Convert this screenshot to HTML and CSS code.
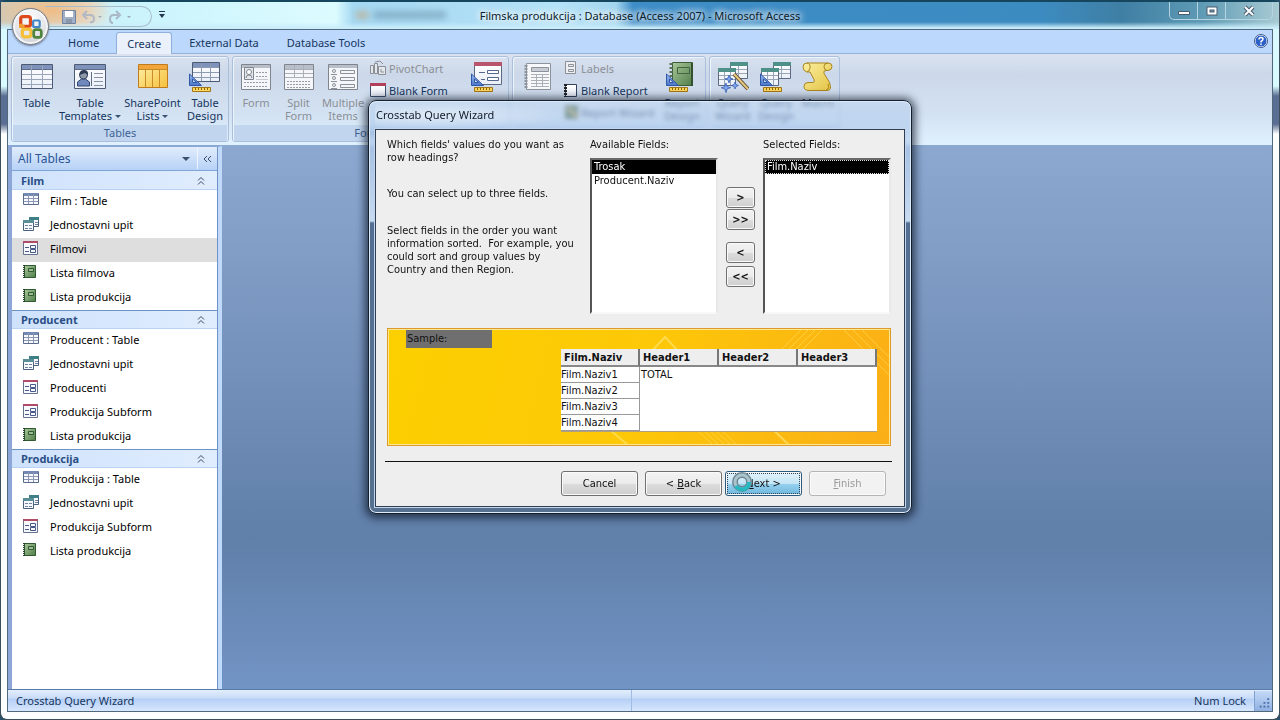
FILE: index.html
```html
<!DOCTYPE html>
<html lang="en">
<head>
<meta charset="utf-8">
<title>Filmska produkcija : Database (Access 2007) - Microsoft Access</title>
<link rel="stylesheet" href="styles.css">
</head>
<body>
<svg class="defs" aria-hidden="true">
  <defs>
    <linearGradient id="sheet" x1="0" y1="0" x2="0" y2="1"><stop offset="0" stop-color="#fff"/><stop offset="1" stop-color="#e9eef8"/></linearGradient>
    <linearGradient id="gold" x1="0" y1="0" x2="1" y2="1"><stop offset="0" stop-color="#fff0a8"/><stop offset="1" stop-color="#f6c03c"/></linearGradient>
    <linearGradient id="scroll" x1="0" y1="0" x2="1" y2="1"><stop offset="0" stop-color="#fbf0a0"/><stop offset="1" stop-color="#e3c244"/></linearGradient>
    <linearGradient id="green" x1="0" y1="0" x2="1" y2="1"><stop offset="0" stop-color="#a9c79a"/><stop offset="1" stop-color="#4f7d48"/></linearGradient>
    <linearGradient id="tri" x1="0" y1="0" x2="0" y2="1"><stop offset="0" stop-color="#9dbdf0"/><stop offset="1" stop-color="#4a75c8"/></linearGradient>
  </defs>
  <symbol id="i-table" viewBox="0 0 32 32"><path fill="url(#sheet)" stroke="#4d5a73" d="M.5 3.500h31v24H.5z"/><path fill="#7e92bb" d="M1 4h30v4H1z"/><path stroke="#5f6d88" fill="none" d="M1 8.500h30"/><path stroke="#9aa5ba" fill="none" d="M1 13.500h30M1 18.500h30M1 23.500h30M10.500 4v23M21.500 4v23"/></symbol>
  <symbol id="i-templates" viewBox="0 0 32 32"><path fill="url(#sheet)" stroke="#4d5a73" d="M.5 3.500h31v24H.5z"/><path fill="#7e92bb" d="M1 4h30v4H1z"/><path stroke="#5f6d88" d="M1 8.500h30M17.500 11v14"/><path stroke="#8791a5" d="M20 12.500h9M20 16.500h9M20 20.500h9M20 24.500h9"/><path fill="#6f88bd" stroke="#33476f" d="M3.500 25v-4l4-3h4l4 3v4z"/><circle cx="9.500" cy="14" r="4" fill="#8e99a9" stroke="#35445f"/><path fill="#2e3b55" d="M5.500 14q0-5 4.500-5t4 5l-3-2z"/></symbol>
  <symbol id="i-share" viewBox="0 0 32 32"><path fill="url(#gold)" stroke="#c07c1c" d="M1.500 3.500h29v23h-29z"/><path fill="#f2a53a" d="M2 4h28v4H2z"/><path stroke="#c98a28" d="M2 8.500h28M8.500 8v18M15.500 8v18M22.500 8v18"/></symbol>
  <symbol id="i-tools" viewBox="0 0 32 32"><path fill="url(#tri)" stroke="#3058a8" d="M.5 13v11.500h12z"/><path fill="#dfe9fb" stroke="#3058a8" d="M3.500 18v3.500h4z"/><path fill="#ffd75a" stroke="#a2761a" d="M3.500 26.500h18v4h-18z"/><path stroke="#8c6410" d="M6.500 27v2M9.500 27v2M12.500 27v2M15.500 27v2M18.500 27v2"/></symbol>
  <symbol id="i-tdesign" viewBox="0 0 32 32"><path fill="url(#sheet)" stroke="#4d5a73" d="M3.500 1.500h27v19h-27z"/><path fill="#7e92bb" d="M4 2h26v4H4z"/><path stroke="#8f9bb3" d="M4 6.500h26M4 11.500h26M4 16.500h26M12.500 2v18M21.500 2v18"/><use href="#i-tools"/></symbol>
  <symbol id="i-form" viewBox="0 0 32 32"><path fill="#f4f6f9" stroke="#7f858e" d="M1.500 3.500h29v25h-29z"/><path fill="#b9bfc8" d="M2 4h28v3H2z"/><path fill="#e4e7ec" stroke="#7f858e" d="M4.500 6.500h9v12h-9z"/><circle cx="9" cy="11" r="2.500" fill="#fff" stroke="#81868e"/><path fill="none" stroke="#81868e" d="M6 17q0-3 3-3t3 3"/><path stroke="#969ca5" stroke-dasharray="2 1" d="M16 11.500h12M16 15.500h12M4 21.500h24M4 25.500h24"/><path stroke="#c5c9cf" d="M16 18.500h12"/></symbol>
  <symbol id="i-split" viewBox="0 0 32 32"><path fill="#f4f6f9" stroke="#7f858e" d="M1.500 3.500h29v25h-29z"/><path fill="#b9bfc8" d="M2 4h28v4H2z"/><path stroke="#aab0b9" d="M2 8.500h28M2 12.500h28M2 16.500h28M11.500 4v13M20.500 4v13"/><path stroke="#969ca5" stroke-dasharray="2 1" d="M4 20.500h24M4 23.500h24M4 26.500h24"/></symbol>
  <symbol id="i-multi" viewBox="0 0 32 32"><path fill="#f4f6f9" stroke="#7f858e" d="M1.500 3.500h29v25h-29z"/><path fill="#b9bfc8" d="M2 4h28v3H2z"/><g fill="none" stroke="#8b9199"><circle cx="7" cy="10" r="1.500"/><circle cx="7" cy="17" r="1.500"/><circle cx="7" cy="24" r="1.500"/><path d="M4 13.500h6M4 20.500h6M4 27.500h6M13.500 9.500h14v3h-14zM13.500 16.500h14v3h-14zM13.500 23.500h14v3h-14z"/></g></symbol>
  <symbol id="i-fdesign" viewBox="0 0 32 32"><path fill="url(#sheet)" stroke="#5c6983" d="M3.500 1.500h27v22h-27z"/><path fill="#b8546c" d="M3 1h28v4H3z"/><path fill="#fff" stroke="#55678c" d="M16.500 9.500h11v3h-11zM16.500 16.500h11v3h-11z"/><path stroke="#55678c" d="M8 11.500h6M10 18.500h4"/><use href="#i-tools"/></symbol>
  <symbol id="i-report" viewBox="0 0 32 32"><path fill="#f6f8fa" stroke="#8d939c" d="M4.500 2.500h24v26h-24z"/><path fill="#c9cdd3" stroke="#8d939c" d="M9.500 6.500h17v4h-17z"/><path stroke="#aab0b8" d="M9 13.500h18M9 16.500h18M9 19.500h18M9 22.500h18M9 25.500h18M14.500 13v13M20.500 13v13"/><path stroke="#8d939c" stroke-dasharray="2 1" stroke-width="3" d="M4 4v24"/></symbol>
  <symbol id="i-rdesign" viewBox="0 0 32 32"><path fill="url(#green)" stroke="#3e5e3a" d="M6.500 1.500h20v23h-20z"/><path fill="#35502f" d="M25 2h2v23h-2z"/><path fill="none" stroke="#446443" d="M11.500 6.500h12v6h-12z"/><path stroke="#58715b" stroke-width="3" stroke-dasharray="2 2" d="M5 2v16"/><use href="#i-tools"/></symbol>
  <symbol id="i-qtables" viewBox="0 0 32 32"><path fill="url(#sheet)" stroke="#5c6983" d="M13.500 1.500h17v16h-17z"/><path fill="#4f9088" d="M13 1h18v4H13z"/><path stroke="#98a5b8" d="M14 8.500h16M14 12.500h16M21.500 5v12"/><path fill="url(#sheet)" stroke="#5c6983" d="M1.500 7.500h17v17h-17z"/><path fill="#4f9088" d="M1 7h18v4H1z"/><path stroke="#98a5b8" d="M2 14.500h16M2 18.500h16M7.500 11v13M13.500 11v13"/></symbol>
  <symbol id="i-qwizard" viewBox="0 0 32 32"><use href="#i-qtables"/><path stroke="#5b4a33" stroke-width="4" d="M17 13l14 15"/><path stroke="#e7c77e" stroke-width="2" d="M17 13l14 15"/><path fill="#7fa6f0" stroke="#2e56b0" stroke-width=".7" d="M12 14l1 3 3 1-3 1-1 3-1-3-3-1 3-1zM9 22l1.200 3.500 3.500 1.200-3.500 1.200L9 31.500 7.800 28l-3.500-1.200 3.500-1.200zM18 21l1 2.500 2.500 1-2.500 1-1 2.500-1-2.500-2.500-1 2.500-1z"/></symbol>
  <symbol id="i-qdesign" viewBox="0 0 32 32"><use href="#i-qtables"/><use href="#i-tools"/></symbol>
  <symbol id="i-macro" viewBox="0 0 32 32"><path fill="url(#scroll)" stroke="#a9861f" d="M5 2h21q4 0 4 3.500T26 9.500h-2q-3 0-2 3l5 8q4 9-2 9H7q-5 0-5-4t4-4h5q2 0 1-3L8 11H5Q1 10 1 6t4-4z"/><path fill="none" stroke="#a9861f" d="M5 2q4 1 3 5t-3 4M26 2q-4 0-4 3.500t3 4M24 29q4-1 2-6"/></symbol>
  <symbol id="i-pivot" viewBox="0 0 16 16"><g fill="#e3e6ea" stroke="#8b9097"><path d="M.5 5.500h3v8h-3zM4.500 3.500h3v10h-3zM8.500 6.500h7v8h-7z"/><path fill="none" d="M5 2l5-1 3 3M11 9v3h3"/></g></symbol>
  <symbol id="i-blankform" viewBox="0 0 16 16"><path fill="url(#sheet)" stroke="#3f506f" d="M.5 1.500h15v13H.5z"/><path fill="#b3405a" d="M0 1h16v3H0z"/></symbol>
  <symbol id="i-labels" viewBox="0 0 16 16"><path fill="#eef0f3" stroke="#8b9097" d="M1.500 1.500h10v12h-10z"/><path fill="none" stroke="#8b9097" d="M4.500 4.500h5v2h-5zM4.500 9.500h5v2h-5z"/></symbol>
  <symbol id="i-blankreport" viewBox="0 0 16 16"><path fill="url(#sheet)" stroke="#33415e" d="M1.500 2.500h11v12h-11z"/><path stroke="#222" stroke-width="3" stroke-dasharray="2 1" d="M1.500 2v13"/></symbol>
  <symbol id="i-rwizard" viewBox="0 0 16 16"><path fill="#3f5a34" d="M1 1h13v14H1z"/><path stroke="#c9a545" stroke-width="3" d="M4 4l9 9"/></symbol>
  <symbol id="s-table" viewBox="0 0 16 16"><path fill="#f7f9fd" stroke="#5a6a8c" d="M.5 1.500h15v11H.5z"/><path fill="#7488b4" d="M1 1h14v3H1z"/><path stroke="#8c98b3" d="M1 6.500h14M1 9.500h14M5.500 2v10M10.500 2v10"/></symbol>
  <symbol id="s-query" viewBox="0 0 16 16"><path fill="#f7f9fd" stroke="#4b617c" d="M6.500 1.500h9v9h-9z"/><path fill="#3f7f86" d="M6 1h10v3H6z"/><path stroke="#71839c" d="M12 6.500h3M12 8.500h3"/><path fill="#f7f9fd" stroke="#4b617c" d="M.5 4.500h10v10H.5z"/><path fill="#5b8f98" d="M0 4h11v3H0z"/><path stroke="#71839c" stroke-dasharray="3 1" d="M2 9.500h8M2 12.500h8"/></symbol>
  <symbol id="s-form" viewBox="0 0 16 16"><path fill="#f7f9fd" stroke="#66708f" d="M.5 1.500h14v13H.5z"/><path fill="#b14c68" d="M0 1h15v2H0z"/><path fill="none" stroke="#48588a" d="M2 7.500h4M2 11.500h4M7.500 5.500h5v3h-5zM7.500 9.500h5v3h-5z"/></symbol>
  <symbol id="s-report" viewBox="0 0 16 16"><path fill="url(#green)" stroke="#2f5a31" d="M1.500 1.500h11v12h-11z"/><path fill="#9dbb92" stroke="#2f5a31" d="M5.500 4.500h5v3h-5z"/><path stroke="#24432a" stroke-width="2" stroke-dasharray="1 1" d="M1 1v13"/></symbol>
  <symbol id="i-up" viewBox="0 0 8 8"><path fill="none" stroke="#3b4a66" d="M1 4l3-3 3 3M1 8l3-3 3 3"/></symbol>
</svg>

<div class="window">
  <header class="titlebar">
    <div class="quick">
      <button class="qbtn" aria-label="Save"><svg viewBox="0 0 14 14" width="14" height="14"><path fill="#9fb0c8" stroke="#71829c" d="M.5.5h13v13H.5z"/><path fill="#fff" d="M3 1h8v6H3z"/><path fill="#8a97ab" d="M4 9h6v4H4z"/></svg></button>
      <button class="qbtn" aria-label="Undo"><svg viewBox="0 0 20 14" width="20" height="14"><path fill="none" stroke="#b3b9c4" stroke-width="2" d="M2 5h6q4 0 4 4t-4 3M5 1L1 5l4 4"/><path fill="#a5acb9" d="M16 6h4l-2 2z"/></svg></button>
      <button class="qbtn" aria-label="Redo"><svg viewBox="0 0 24 14" width="24" height="14"><path fill="none" stroke="#a9b7c6" stroke-width="2" d="M10 5H6Q2 5 2 9t3 4M8 1l4 4-4 4"/><path fill="#9aa7b8" d="M19 6h4l-2 2z"/></svg></button>
    </div>
    <button class="qbtn more" aria-label="Customize Quick Access Toolbar"><svg viewBox="0 0 8 8" width="8" height="8"><path fill="#263850" d="M1 0h6v1H1zM1 3h6L4 7z"/></svg></button>
    <span class="backtab"></span>
    <h1 class="title">Filmska produkcija : Database (Access 2007) - Microsoft Access</h1>
    <div class="controls">
      <button aria-label="Minimize"><svg viewBox="0 0 14 12" width="14" height="12"><path fill="#fff" stroke="#4a5a6c" d="M1.500 6.500h11v3h-11z"/></svg></button>
      <button aria-label="Maximize"><svg viewBox="0 0 14 12" width="14" height="12"><path fill="none" stroke="#4a5a6c" stroke-width="4" d="M3.500 3.500h7v5h-7z"/><path fill="none" stroke="#fff" stroke-width="2" d="M3.500 3.500h7v5h-7z"/></svg></button>
      <button class="close" aria-label="Close"><svg viewBox="0 0 14 12" width="14" height="12"><path stroke="#4a5a6c" stroke-width="4" d="M3 2l8 8M11 2l-8 8"/><path stroke="#fff" stroke-width="2" d="M3 2l8 8M11 2l-8 8"/></svg></button>
    </div>
    <button class="orb" aria-label="Office Button"><svg viewBox="0 0 24 24" width="26" height="26"><g fill="none"><rect x="2.500" y="2.500" width="9" height="9" rx="2" stroke="#dc4a1e" stroke-width="3"/><path stroke="#f09a2a" stroke-width="3" d="M2.500 9v2.500H6"/><rect x="14" y="6" width="6" height="6" rx="1" stroke="#3f86c8" stroke-width="2"/><rect x="4" y="14" width="8" height="7" rx="2" stroke="#f6bf3a" stroke-width="3"/><rect x="14.500" y="14.500" width="7" height="7" rx="2" stroke="#4f8440" stroke-width="2.500"/></g></svg></button>
  </header>

  <div class="app">
    <nav class="tabs">
      <button class="tab">Home</button><button class="tab active">Create</button><button class="tab">External Data</button><button class="tab">Database Tools</button>
      <button class="help" aria-label="Help"><svg viewBox="0 0 14 14" width="14" height="14"><circle cx="7" cy="7" r="6" fill="#2d5fc8" stroke="#fff"/><circle cx="7" cy="7" r="6.500" fill="none" stroke="#3c5a90"/><path fill="none" stroke="#fff" stroke-width="1.500" d="M5 5.500q0-2 2-2t2 1.500-2 2.500v1M7 9.500v1.500"/></svg></button>
    </nav>

    <div class="ribbon">
      <section class="group g-tables">
        <div class="cells">
          <button class="big"><svg><use href="#i-table"/></svg><span>Table</span></button>
          <button class="big"><svg><use href="#i-templates"/></svg><span>Table<br>Templates <i class="caret"></i></span></button>
          <button class="big"><svg><use href="#i-share"/></svg><span>SharePoint<br>Lists <i class="caret"></i></span></button>
          <button class="big"><svg><use href="#i-tdesign"/></svg><span>Table<br>Design</span></button>
        </div>
        <h2>Tables</h2>
      </section>
      <section class="group g-forms">
        <div class="cells">
          <button class="big" disabled><svg><use href="#i-form"/></svg><span>Form</span></button>
          <button class="big" disabled><svg><use href="#i-split"/></svg><span>Split<br>Form</span></button>
          <button class="big" disabled><svg><use href="#i-multi"/></svg><span>Multiple<br>Items</span></button>
          <div class="stack">
            <button class="small" disabled><svg><use href="#i-pivot"/></svg>PivotChart</button>
            <button class="small"><svg><use href="#i-blankform"/></svg>Blank Form</button>
          </div>
          <button class="big"><svg><use href="#i-fdesign"/></svg></button>
        </div>
        <h2>Forms</h2>
      </section>
      <section class="group g-reports">
        <div class="cells">
          <button class="big" disabled><svg><use href="#i-report"/></svg></button>
          <div class="stack">
            <button class="small" disabled><svg><use href="#i-labels"/></svg>Labels</button>
            <button class="small"><svg><use href="#i-blankreport"/></svg>Blank Report</button>
            <button class="small"><svg><use href="#i-rwizard"/></svg>Report Wizard</button>
          </div>
          <button class="big"><svg><use href="#i-rdesign"/></svg><span>Report<br>Design</span></button>
        </div>
        <h2></h2>
      </section>
      <section class="group g-other">
        <div class="cells">
          <button class="big"><svg><use href="#i-qwizard"/></svg><span>Query<br>Wizard</span></button>
          <button class="big"><svg><use href="#i-qdesign"/></svg><span>Query<br>Design</span></button>
          <button class="big"><svg><use href="#i-macro"/></svg><span>Macro</span></button>
        </div>
        <h2></h2>
      </section>
    </div>

    <main class="work">
      <aside class="nav">
        <div class="navhead"><span>All Tables</span><button class="drop" aria-label="Choose category"><i class="caret"></i></button><button class="fold" aria-label="Collapse pane"><svg viewBox="0 0 9 8" width="9" height="8"><path fill="none" stroke="#3b4a66" d="M4 1L1 4l3 3M8 1L5 4l3 3"/></svg></button></div>
        <h3>Film<svg><use href="#i-up"/></svg></h3>
        <ul>
          <li><svg><use href="#s-table"/></svg>Film : Table</li>
          <li><svg><use href="#s-query"/></svg>Jednostavni upit</li>
          <li class="current"><svg><use href="#s-form"/></svg>Filmovi</li>
          <li><svg><use href="#s-report"/></svg>Lista filmova</li>
          <li><svg><use href="#s-report"/></svg>Lista produkcija</li>
        </ul>
        <h3>Producent<svg><use href="#i-up"/></svg></h3>
        <ul>
          <li><svg><use href="#s-table"/></svg>Producent : Table</li>
          <li><svg><use href="#s-query"/></svg>Jednostavni upit</li>
          <li><svg><use href="#s-form"/></svg>Producenti</li>
          <li><svg><use href="#s-form"/></svg>Produkcija Subform</li>
          <li><svg><use href="#s-report"/></svg>Lista produkcija</li>
        </ul>
        <h3>Produkcija<svg><use href="#i-up"/></svg></h3>
        <ul>
          <li><svg><use href="#s-table"/></svg>Produkcija : Table</li>
          <li><svg><use href="#s-query"/></svg>Jednostavni upit</li>
          <li><svg><use href="#s-form"/></svg>Produkcija Subform</li>
          <li><svg><use href="#s-report"/></svg>Lista produkcija</li>
        </ul>
      </aside>
    </main>

    <footer class="status">
      <span class="message">Crosstab Query Wizard</span>
      <span class="keys">Num Lock</span>
      <svg class="grip" viewBox="0 0 18 20" width="18" height="20"><path fill="#4a6ea8" d="M13 7h2v2h-2zM9 11h2v2H9zM13 11h2v2h-2zM5 15h2v2H5zM9 15h2v2H9zM13 15h2v2h-2z"/></svg>
    </footer>
  </div>

  <section class="dialog" role="dialog" aria-labelledby="wiz">
    <h2 id="wiz" class="dtitle">Crosstab Query Wizard</h2>
    <form class="dbody">
      <div class="pick">
        <div class="intro">
          <p>Which fields' values do you want as row headings?</p>
          <p>You can select up to three fields.</p>
          <p>Select fields in the order you want information sorted.&nbsp; For example, you could sort and group values by Country and then Region.</p>
        </div>
        <div class="field">
          <label for="avail">Available Fields:</label>
          <select id="avail" size="10"><option selected>Trosak</option><option>Producent.Naziv</option></select>
        </div>
        <div class="moves">
          <button type="button">&gt;</button><button type="button">&gt;&gt;</button>
          <button type="button" class="back">&lt;</button><button type="button">&lt;&lt;</button>
        </div>
        <div class="field">
          <label for="sel">Selected Fields:</label>
          <select id="sel" class="focus" size="10"><option selected>Film.Naziv</option></select>
        </div>
      </div>

      <div class="sample">
        <svg class="deco" viewBox="0 0 502 116" preserveAspectRatio="none" aria-hidden="true"><g fill="none" stroke="#ffe36a" stroke-opacity=".7"><path stroke-width="2" d="M262 24l15-16 15 16M216 96l24 20M376 92l25 24"/><path stroke-opacity=".5" d="M308 100l17 16M314 100l17 16M320 100l17 16M326 100l17 16M332 100l17 16M394 20l20-20M401 20l20-20M408 20l20-20M415 20l20-20M455 0l47 47M464 0l38 38M473 0l29 29"/></g></svg>
        <span class="slabel">Sample:</span>
        <table>
          <thead><tr><th>Film.Naziv</th><th>Header1</th><th>Header2</th><th>Header3</th></tr></thead>
          <tbody>
            <tr><td>Film.Naziv1</td><td class="total" colspan="3" rowspan="4">TOTAL</td></tr>
            <tr><td>Film.Naziv2</td></tr>
            <tr><td>Film.Naziv3</td></tr>
            <tr><td>Film.Naziv4</td></tr>
          </tbody>
        </table>
      </div>

      <div class="actions">
        <button type="button">Cancel</button>
        <div class="pair">
          <button type="button">&lt; <u>B</u>ack</button>
          <button type="button" class="next"><u>N</u>ext &gt;<svg class="busy" viewBox="0 0 20 20" width="20" height="20"><circle cx="10" cy="10" r="7" fill="none" stroke="#6f8794" stroke-width="6"/><circle cx="10" cy="10" r="7" fill="none" stroke="#a9c4cd" stroke-width="3"/><path fill="none" stroke="#27b9c2" stroke-width="4" d="M17 10A7 7 0 0 1 4 14"/></svg></button>
        </div>
        <button type="button" disabled><u>F</u>inish</button>
      </div>
    </form>
  </section>
</div>
</body>
</html>
```
FILE: styles.css
```css
* { box-sizing: border-box; }
body { margin: 0; font: 11px/13px "Noto Sans", "Open Sans", sans-serif; color: #15355f; background: #28506a; }
h1, h2, h3, p, ul { margin: 0; padding: 0; font-size: inherit; font-weight: normal; }
ul { list-style: none; }
button { font: inherit; color: inherit; background: none; border: 0; padding: 0; margin: 0; }
.defs { position: absolute; width: 0; height: 0; }

.window {
  position: relative; min-height: 100vh; display: flex; flex-direction: column;
  padding: 0 6px 7px; border: 1px solid #3d4c58; border-top: 2px solid #16465e; border-radius: 7px;
  background: linear-gradient(#d9f8ff 0, #d9fbff 84px, #5a6d92 94px, #5a6d92 122px, #fdfefe 132px, #fdfefe 100%);
}

.titlebar {
  position: relative; display: flex; align-items: flex-start; height: 27px; margin: 0 -6px; padding-left: 44px;
  background:
    linear-gradient(transparent 20px, #c9edfa 26px),
    radial-gradient(ellipse 60px 24px at 50px 8px, #efbd86, transparent),
    linear-gradient(90deg, #d0c9b8, #e5dfd4 85px, #c9f3fc 115px, #dcfbff 335px, #a5d8f3 352px, #b4e2f6 560px, #a2d6ef 615px, #3d8dc8 632px, #3c8bc0 1040px, #3f7fa4 1120px, #5e9ab4 1200px, #a9cbd4 1278px);
}
.quick { display: flex; align-items: center; gap: 6px; width: 107px; height: 21px; margin-top: 4px; padding-left: 17px; border: 1px solid #a9bccb; border-left: 0; border-radius: 0 11px 11px 0; }
.qbtn { display: flex; }
.more { margin: 9px 0 0 6px; }
.backtab { width: 90px; height: 8px; margin: 9px 0 0 190px; background: linear-gradient(90deg, #d08a3c 12px, transparent 13px 17px, #54738c 18px); opacity: .4; filter: blur(3px); }
.title { position: absolute; left: 0; right: 0; top: 7px; text-align: center; color: #0c1c2c; text-shadow: 0 0 6px #fff, 0 0 8px #fff, 0 0 10px #fff; }
.controls { position: relative; display: flex; margin: 0 6px 0 auto; border: 1px solid #b4d4e2; border-top: 0; border-radius: 0 0 5px 5px; }
.controls button { display: flex; align-items: center; justify-content: center; width: 28px; height: 17px; border-right: 1px solid #b4d4e2; }
.controls .close { width: 46px; border-right: 0; }
.orb { position: absolute; left: 11px; top: 6px; z-index: 2; display: grid; place-items: center; width: 37px; height: 37px; border-radius: 50%; border: 1px solid #77797f; background: radial-gradient(circle at 50% 30%, #fff, #dfe0e4 60%, #b9bdc6); box-shadow: 0 1px 2px #6d7c95, inset 0 0 0 2px #f5f6f8; }

.app { flex: 1; display: flex; flex-direction: column; border: 1px solid #51697d; }
.tabs { display: flex; align-items: flex-end; height: 24px; padding-left: 49px; background: #bcd8fd; border-bottom: 1px solid #93b3de; }
.tab { height: 21px; padding: 0 11px; margin-right: 6px; }
.tab.active { height: 22px; padding: 0 10px; margin-bottom: -1px; background: #eaf1fb; border: 1px solid #8eb0dd; border-bottom: 0; border-radius: 3px 3px 0 0; }
.help { display: flex; margin: 0 4px 5px auto; }

.ribbon { display: flex; gap: 3px; padding: 2px 3px 3px; background: linear-gradient(#dbe3f0, #ccd8e9 20px, #d3e2f2 60px, #e0f1ff); border-bottom: 1px solid #8aa9d0; }
.group { display: flex; flex-direction: column; justify-content: space-between; height: 86px; border: 1px solid #a9bfdb; border-radius: 3px; box-shadow: inset 1px 1px 0 #eef4fb; }
.group h2 { height: 16px; margin: 0 1px; line-height: 15px; text-align: center; color: #3e6396; background: #c1d6ee; border-radius: 0 0 2px 2px; }
.cells { display: grid; }
.g-tables .cells { grid-template-columns: 49px 58px 67px 42px; }
.g-tables .big:last-child { padding-right: 4px; }
.g-forms .cells { grid-template-columns: 46px 39px 50px 98px 42px; }
.g-reports .cells { grid-template-columns: 49px 97px 46px; }
.g-other .cells { grid-template-columns: 45px 42px 42px; }
.big { display: flex; flex-direction: column; align-items: center; gap: 3px; padding-top: 4px; white-space: nowrap; }
.big svg { width: 32px; height: 32px; flex: none; }
.big span { margin: 0 -8px; }
.big:disabled, .small:disabled { color: #8b8f96; }
.stack { display: flex; flex-direction: column; padding-left: 2px; }
.small { display: flex; align-items: center; gap: 3px; height: 22px; white-space: nowrap; }
.g-reports .small { gap: 1px; }
.small svg { width: 16px; height: 16px; }
.caret { display: inline-block; border: 3px solid transparent; border-top-color: #3c5070; border-bottom: 0; vertical-align: 2px; }
.drop .caret { border-width: 4px 4px 0; }

.work { flex: 1; display: flex; background: linear-gradient(#8ca8d0, #819dc6 20%, #607fa9 72%, #7294c5); }
.nav { width: 214px; background: #fff; border: solid #8ca6d8; border-width: 1px 0 0 4px; border-right: 4px solid #c1dafa; box-shadow: inset -1px 0 0 #6f93c6; color: #000; padding-right: 1px; }
.navhead { display: flex; align-items: center; height: 24px; padding-left: 6px; font-size: 12px; color: #2a5597; background: linear-gradient(#e0ecfc, #b7d2f7); border-bottom: 1px solid #7fa4d8; }
.drop { display: flex; justify-content: center; margin-left: auto; width: 20px; }
.fold { display: flex; align-items: center; height: 21px; padding: 0 5px; margin-left: 1px; border-left: 1px solid #eff6ff; }
.nav h3 { display: flex; align-items: center; justify-content: space-between; height: 19px; padding: 0 12px 0 9px; font-weight: bold; color: #2a4f86; background: linear-gradient(90deg, #cfe2fc, #e0edfe); border-bottom: 1px solid #b9d3f5; }
.nav ul + h3 { border-top: 1px solid #6d93c4; }
.nav h3 svg { width: 8px; height: 9px; }
.nav li { display: flex; align-items: center; gap: 11px; height: 24px; padding: 0 0 4px 11px; }
.nav li svg { width: 16px; height: 16px; }
.nav .current { background: #dedede; }

.status { display: flex; align-items: center; height: 22px; border-top: 1px solid #577aa9; background: linear-gradient(#e3eefc, #c9dcf8 8px, #b5cff5 9px, #d7e7fd); }
.message { flex: 1; padding-left: 8px; }
.keys { flex: 1; align-self: stretch; padding: 4px 8px 0 0; text-align: right; border-left: 1px solid #a1bce3; }
.grip { border-left: 1px solid #7ea0d2; background: linear-gradient(#c4d9f8, #8fb0e0); }

.dialog {
  position: absolute; left: 367px; top: 98px; width: 544px; padding: 0 6px 6px;
  border: 1px solid #141f2e; border-radius: 8px; backdrop-filter: blur(2px);
  background: linear-gradient(rgba(190,212,238,.6), rgba(172,200,236,.6) 28px, rgba(205,224,244,.9) 120px, #546e92 122px, #56708f);
  box-shadow: inset 0 0 0 1px #dceafa, 0 1px 8px 3px rgba(10,20,35,.7);
}
.dtitle { width: 190px; height: 28px; padding: 7px 0 0 1px; color: #101a28; background: radial-gradient(ellipse at 30% 50%, rgba(225,236,248,.9), transparent 70%); border-radius: 8px; }
.dbody { padding: 8px 13px 10px 11px; background: #eee; border: 1px solid #2c3e55; box-shadow: 0 0 0 1px #c5d6ea; font: 11px/13px "DejaVu Sans Condensed", "DejaVu Sans", sans-serif; color: #111; }
.pick { display: flex; gap: 8px; }
.intro { flex: 1; }
.intro p { width: 188px; margin-bottom: 24px; }
.intro p:first-child { margin-bottom: 23px; }
.field { width: 128px; }
.field label { display: block; height: 20px; }
.field select { display: block; width: 100%; height: 156px; padding: 0; font: inherit; color: #111; background: #fff; border: 2px solid #555; border-color: #6a6a6a #e8e8e8 #f8f8f8 #555; border-radius: 0; overflow: hidden; outline: 0; }
.field option { height: 14px; min-height: 14px; padding: 0 2px; line-height: 14px; }
.field option:checked { background: linear-gradient(#000, #000); color: #fff; -webkit-text-fill-color: #fff; }
.focus option:checked { outline: 1px dotted #ddd; outline-offset: -1px; }
.moves { display: flex; flex-direction: column; gap: 1px; width: 29px; padding-top: 49px; }
.dbody button { border: 1px solid #707070; border-radius: 3px; background: linear-gradient(#f3f3f3, #ebebeb 50%, #dcdcdc 51%, #cfcfcf); box-shadow: inset 0 0 0 1px #fafafa; color: #111; }
.moves button { height: 21px; font-weight: bold; }
.moves .back { margin: 11px 0 2px; }

.sample { position: relative; height: 118px; margin-top: 14px; border: 1px solid #dd9a2c; background: linear-gradient(105deg, #fcd000, #fdc808 50%, #fbae17); box-shadow: inset 0 0 0 1px #ffe790; }
.deco { position: absolute; inset: 0; width: 100%; height: 100%; }
.slabel { position: relative; display: block; width: 86px; height: 18px; margin: 1px 0 0 18px; padding: 2px 1px; background: #6f6f6f; }
.sample table { position: relative; width: 316px; margin: 1px 13px 0 auto; border-collapse: separate; border-spacing: 0; table-layout: fixed; background: #fff; border-bottom: 1px solid #b0a080; }
.sample th { height: 18px; padding: 0 3px; text-align: left; background: #eee; border-right: 2px solid #777; border-bottom: 2px solid #888; line-height: 15px; }
.sample td { height: 16px; padding: 0; line-height: 15px; border-right: 1px solid #999; border-bottom: 1px solid #999; }
.sample .total { padding-left: 1px; vertical-align: top; border: 0; }

.actions { display: flex; justify-content: flex-end; gap: 7px; margin: 15px -1px 0 -2px; padding: 9px 6px 0 0; border-top: 1px solid #111; }
.pair { display: flex; gap: 3px; }
.actions button { width: 77px; height: 25px; }
.actions .next { position: relative; border-color: #2c5b7c; background: linear-gradient(#e5f4fc, #c4e5f6 50%, #98d1ef 51%, #6db6dd); outline: 1px dotted #345; outline-offset: -3px; }
.busy { position: absolute; left: 6px; top: 0; }
.actions button:disabled { color: #999; border-color: #b5b5b5; background: #f2f2f2; }
```
